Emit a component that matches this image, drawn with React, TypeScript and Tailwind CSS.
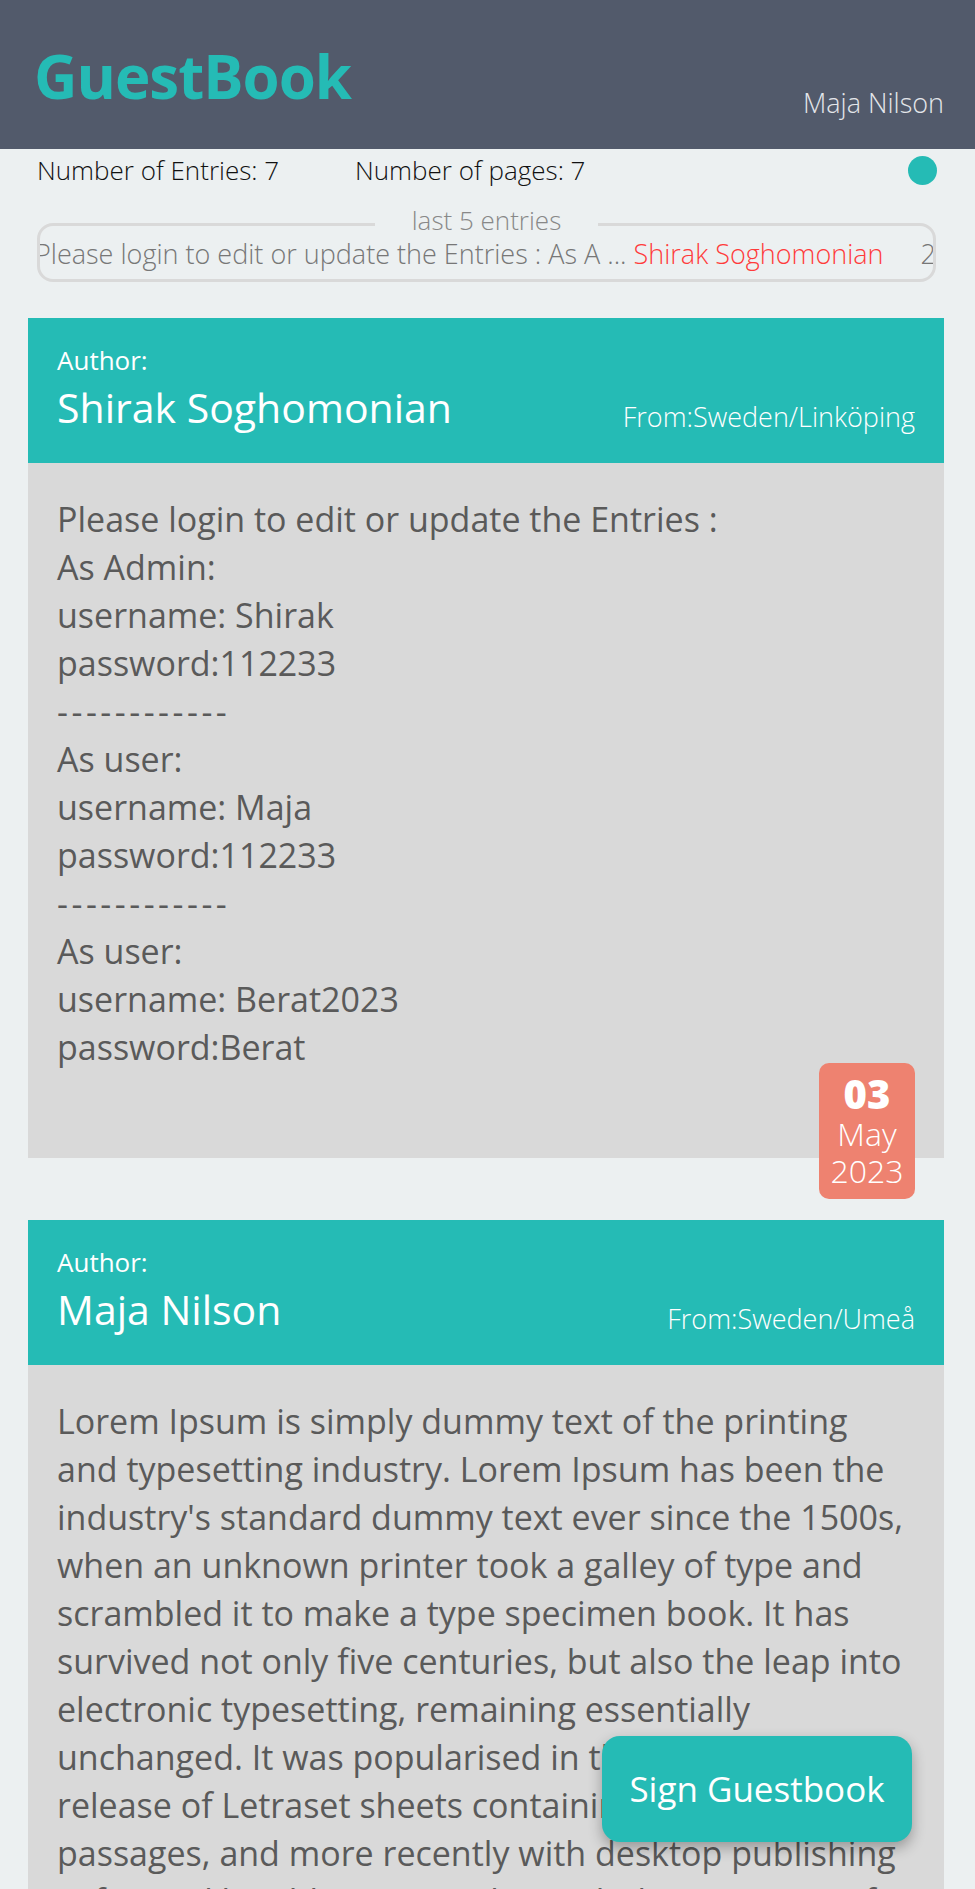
import { useState } from "react";

type Entry = {
  id: number;
  author: string;
  from: string;
  text: string;
  day: string;
  month: string;
  year: string;
};

const lorem =
  "Lorem Ipsum is simply dummy text of the printing and typesetting industry. Lorem Ipsum has been the industry's standard dummy text ever since the 1500s, when an unknown printer took a galley of type and scrambled it to make a type specimen book. It has survived not only five centuries, but also the leap into electronic typesetting, remaining essentially unchanged. It was popularised in the 1960s with the release of Letraset sheets containing Lorem Ipsum passages, and more recently with desktop publishing software like Aldus PageMaker including versions of Lorem Ipsum.";

const entries: Entry[] = [
  {
    id: 1,
    author: "Shirak Soghomonian",
    from: "Sweden/Linköping",
    text: "Please login to edit or update the Entries :\nAs Admin:\nusername: Shirak\npassword:112233\n------------\nAs user:\nusername: Maja\npassword:112233\n------------\nAs user:\nusername: Berat2023\npassword:Berat",
    day: "03",
    month: "May",
    year: "2023",
  },
  {
    id: 2,
    author: "Maja Nilson",
    from: "Sweden/Umeå",
    text: lorem,
    day: "03",
    month: "May",
    year: "2023",
  },
];

function EntryText({ text }: { text: string }) {
  // separator lines ("-----") are drawn a bit wider, like the original font
  return (
    <div className="text-[34px] leading-[48px] text-[#5a5a5a]">
      {text.split("\n").map((line, i) => (
        <p key={i} className={/^-+$/.test(line) ? "tracking-[3.5px]" : ""}>
          {line}
        </p>
      ))}
    </div>
  );
}

function EntryCard({ entry }: { entry: Entry }) {
  return (
    <article className="relative ml-[28px] mr-[31px] mb-[62px]">
      <div className="bg-[#25bbb5] px-[29px] pt-[25px] pb-[31px] text-white">
        <div className="text-[26px] leading-[34px]">Author:</div>
        <div className="mt-[5px] flex items-end justify-between">
          <h2 className="text-[41px] leading-[50px]">{entry.author}</h2>
          <span className="text-[27px] font-light leading-[30px]">
            From:{entry.from}
          </span>
        </div>
      </div>
      <div className="bg-[#d9d9d9] px-[29px] pt-[32px] pb-[87px]">
        <EntryText text={entry.text} />
      </div>
      <div className="absolute right-[29px] bottom-[-41px] flex h-[136px] w-[96px] flex-col items-center justify-center rounded-[10px] bg-[#ee8270] text-white">
        <span className="text-[40px] font-black leading-[42px]">{entry.day}</span>
        <span className="text-[32px] font-light leading-[37px]">{entry.month}</span>
        <span className="text-[32px] font-light leading-[37px]">{entry.year}</span>
      </div>
    </article>
  );
}

export default function App() {
  const [user] = useState("Maja Nilson");

  return (
    <div className="relative h-screen overflow-hidden bg-[#ecf0f1] font-['Open_Sans',sans-serif]">
      <header className="flex h-[149px] justify-between bg-[#525a6b] pl-[34px] pr-[31px]">
        <h1 className="mt-[46px] self-start text-[60px] font-bold leading-none tracking-[-1px] text-[#25bbb5]">
          GuestBook
        </h1>
        <span className="mb-[33px] self-end text-[27px] font-light leading-none text-[#e4e6ea]">
          {user}
        </span>
      </header>

      <div className="mt-[4px] flex items-center pl-[37px] pr-[38px] text-[26px] font-light leading-[34px] text-[#111]">
        <span className="w-[318px]">Number of Entries: 7</span>
        <span>Number of pages: 7</span>
        <span className="ml-auto h-[29px] w-[29px] rounded-full bg-[#25bbb5]" />
      </div>

      <fieldset className="mt-[16px] ml-[37px] mr-[39px] min-w-0 rounded-[16px] border-[3px] border-[#d9d9d9] pb-[8px]">
        <legend className="mx-auto px-[37px] pb-[8px] text-[26px] font-light leading-[34px] text-[#888]">
          last 5 entries
        </legend>
        <div className="-mt-[8px] overflow-hidden">
          <div className="-ml-[5px] flex gap-[37px] whitespace-nowrap text-[27px] font-light leading-[34px] text-[#777]">
            <span>
              Please login to edit or update the Entries : As A ...{" "}
              <span className="text-[#ff3b3b]">Shirak Soghomonian</span>
            </span>
            <span>
              2023-05-03{" "}
              <span className="text-[#ff3b3b]">Maja Nilson</span>
            </span>
          </div>
        </div>
      </fieldset>

      <main className="mt-[36px]">
        {entries.map((entry) => (
          <EntryCard key={entry.id} entry={entry} />
        ))}
      </main>

      <button className="absolute right-[63px] bottom-[47px] h-[106px] w-[310px] rounded-[18px] bg-[#25bbb5] text-[35px] text-white shadow-[0_6px_14px_rgba(0,0,0,0.3)]">
        Sign Guestbook
      </button>
    </div>
  );
}
